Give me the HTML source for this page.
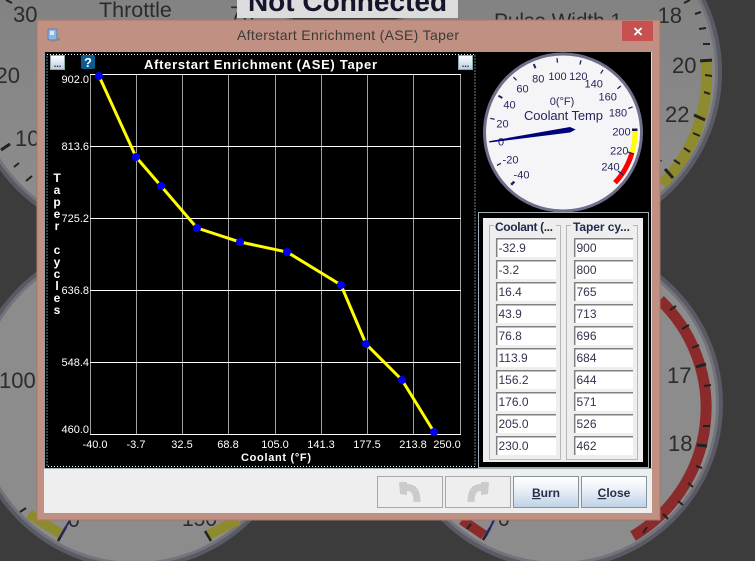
<!DOCTYPE html>
<html><head><meta charset="utf-8"><title>Afterstart Enrichment (ASE) Taper</title>
<style>
html,body{margin:0;padding:0;background:#3c3c3c;width:755px;height:561px;overflow:hidden}
svg{display:block;font-family:"Liberation Sans",sans-serif}
.g{fill:#2b2b2b}
.yl{fill:#fff;font-size:11px;text-anchor:end}
.xl{fill:#fff;font-size:11px;text-anchor:middle}
.ya{fill:#fff;font-size:12px;font-weight:bold;text-anchor:middle}
.gl{fill:#26265e;font-size:11px;text-anchor:middle}
.ft{fill:#33334f;font-size:12px}
.h{fill:#1e2a4a;font-size:12px;font-weight:bold}
.bt{fill:#26304a;font-size:12px;font-weight:bold;text-anchor:middle}
</style></head><body>
<svg width="755" height="561" viewBox="0 0 755 561" xmlns="http://www.w3.org/2000/svg">
<defs>
<linearGradient id="btn" x1="0" y1="0" x2="0" y2="1"><stop offset="0" stop-color="#fff"/><stop offset=".35" stop-color="#f0f4f9"/><stop offset="1" stop-color="#bdd1e6"/></linearGradient>
<linearGradient id="sm" x1="0" y1="0" x2="0" y2="1"><stop offset="0" stop-color="#fff"/><stop offset="1" stop-color="#b9cde0"/></linearGradient>
<linearGradient id="face" x1="0" y1="0" x2="0" y2="1"><stop offset="0" stop-color="#7e7e7e"/><stop offset="1" stop-color="#8e8e8e"/></linearGradient>
</defs>
<rect width="755" height="561" fill="#3c3c3c"/>

<!-- background gauges -->
<g>
<circle cx="135" cy="72" r="167" fill="#5a5a64"/><circle cx="135" cy="72" r="163" fill="#73737c"/><circle cx="135" cy="72" r="160" fill="url(#face)"/>
<circle cx="555" cy="72" r="167" fill="#5a5a64"/><circle cx="555" cy="72" r="163" fill="#73737c"/><circle cx="555" cy="72" r="160" fill="url(#face)"/>
<circle cx="135" cy="404" r="165" fill="#5a5a64"/><circle cx="135" cy="404" r="161" fill="#73737c"/><circle cx="135" cy="404" r="158" fill="#8c8c8c"/>
<circle cx="558" cy="404" r="165" fill="#5a5a64"/><circle cx="558" cy="404" r="161" fill="#73737c"/><circle cx="558" cy="404" r="158" fill="#8c8c8c"/>

<!-- top left ticks -->
<g stroke="#222" stroke-width="2">
<line x1="6" y1="0" x2="12" y2="3"/>
<line x1="1" y1="150" x2="10" y2="144" stroke-width="3"/>
<line x1="14" y1="167" x2="19" y2="163"/><line x1="26" y1="181" x2="32" y2="176"/>
</g>

<!-- top right band -->
<path d="M706 62 A152 152 0 0 1 662 184" fill="none" stroke="#8e8b2e" stroke-width="11"/>
<g stroke="#222" stroke-width="2">
<line x1="684" y1="3" x2="690" y2="0"/><line x1="695" y1="14" x2="701" y2="12"/><line x1="699" y1="29" x2="706" y2="28"/><line x1="703" y1="44" x2="710" y2="44"/>
<line x1="705" y1="75" x2="712" y2="76"/><line x1="704" y1="92" x2="710" y2="94"/>
<line x1="694" y1="115" x2="705" y2="120" stroke-width="3"/><line x1="693" y1="133" x2="700" y2="136"/><line x1="684" y1="148" x2="690" y2="152"/><line x1="674" y1="160" x2="680" y2="164"/>
<line x1="665" y1="169" x2="673" y2="178" stroke-width="3"/>
</g>
<rect x="700" y="59" width="12" height="3" fill="#222" transform="rotate(-4 706 60)"/>

<!-- bottom left band -->
<path d="M29 514 L61 534 M208 535 L238 520" fill="none" stroke="#8e8b2e" stroke-width="10"/>
<g stroke="#222" stroke-width="2"><line x1="20" y1="512" x2="26" y2="508"/><line x1="58" y1="541" x2="66" y2="527" stroke-width="2.5"/><line x1="205" y1="531" x2="211" y2="541" stroke-width="2.5"/></g>
<line x1="60" y1="537" x2="70" y2="520" stroke="#26266e" stroke-width="2"/>

<!-- bottom right band -->
<path d="M660 300 A149 149 0 0 1 633 536" fill="none" stroke="#8a2a2a" stroke-width="11"/>
<path d="M462 520 L484 535" fill="none" stroke="#8a2a2a" stroke-width="10"/>
<g stroke="#222" stroke-width="2">
<line x1="670" y1="310" x2="676" y2="306"/><line x1="682" y1="329" x2="689" y2="325"/><line x1="692" y1="348" x2="699" y2="345"/>
<line x1="696" y1="367" x2="706" y2="364" stroke-width="3"/><line x1="704" y1="386" x2="711" y2="385"/><line x1="703" y1="426" x2="710" y2="426"/>
<line x1="697" y1="445" x2="707" y2="446" stroke-width="3"/><line x1="696" y1="466" x2="702" y2="468"/><line x1="688" y1="483" x2="693" y2="487"/><line x1="678" y1="501" x2="683" y2="505"/><line x1="663" y1="514" x2="668" y2="519"/><line x1="643" y1="533" x2="647" y2="527"/>
<line x1="483" y1="540" x2="490" y2="528" stroke-width="2.5"/><line x1="467" y1="529" x2="471" y2="524"/>
</g>
<line x1="486" y1="536" x2="494" y2="520" stroke="#26266e" stroke-width="2"/>

<!-- gauge text -->
<g font-size="22">
<text class="g" x="99" y="17" font-size="21.5">Throttle</text>
<text class="g" x="13" y="22">30</text><text class="g" x="-4.5" y="83">20</text><text class="g" x="15" y="146">10</text>
<text class="g" x="230" y="22">70</text>
<text class="g" x="494" y="28" font-size="21" textLength="128">Pulse Width 1</text>
<text class="g" x="657.5" y="23">18</text><text class="g" x="672" y="73">20</text><text class="g" x="665" y="122">22</text><text class="g" x="638" y="165">24</text>
<text class="g" x="-1" y="388">100</text>
<text class="g" x="667" y="383">17</text><text class="g" x="668" y="451">18</text>
<text class="g" x="182" y="526" font-size="21">150</text>
<text class="g" x="68" y="527" font-size="21">0</text><text class="g" x="498" y="526" font-size="21">0</text>
</g>

<!-- Not Connected -->
<rect x="237" y="0" width="221" height="18" fill="#dcdcdc"/>
<text x="347.5" y="11" font-size="28" font-weight="bold" fill="#14142a" text-anchor="middle">Not Connected</text>
</g>

<!-- Dialog -->
<rect x="37" y="20" width="623" height="500" fill="#c09082" stroke="#a8796c" stroke-width="1"/>
<rect x="44" y="52" width="608" height="461" fill="#eeeeee"/>
<rect x="622" y="21" width="31" height="20" fill="#c75050"/>
<path d="M634.5 28 L641.5 35 M641.5 28 L634.5 35" stroke="#fff" stroke-width="1.8"/>
<text x="237" y="40" font-size="14" fill="#3a3a3a" textLength="222">Afterstart Enrichment (ASE) Taper</text>
<!-- window icon -->
<rect x="48" y="29" width="9" height="11" rx="1.5" fill="#8fb4e0" stroke="#5b7fb0" stroke-width="1"/>
<rect x="50" y="31" width="4" height="4" fill="#dce8f6"/>
<path d="M52 41 L60 39" stroke="#808890" stroke-width="2"/>

<!-- black content -->
<rect x="44" y="52" width="608" height="417" fill="#000"/>
<line x1="44.5" y1="52" x2="44.5" y2="469" stroke="#8fa0a8"/>
<line x1="651.5" y1="52" x2="651.5" y2="469" stroke="#cfdde4"/>
<line x1="44" y1="468.5" x2="652" y2="468.5" stroke="#9fb0b8"/>
<rect x="47" y="54.5" width="428" height="412" fill="none" stroke="#fff" stroke-dasharray="1 2"/>

<!-- chart -->
<g stroke="#a0a0a0" stroke-width="1">
<line x1="90.5" y1="74" x2="90.5" y2="434"/><line x1="136.5" y1="74" x2="136.5" y2="434"/><line x1="182.5" y1="74" x2="182.5" y2="434"/><line x1="228.5" y1="74" x2="228.5" y2="434"/><line x1="275.5" y1="74" x2="275.5" y2="434"/><line x1="321.5" y1="74" x2="321.5" y2="434"/><line x1="367.5" y1="74" x2="367.5" y2="434"/><line x1="413.5" y1="74" x2="413.5" y2="434"/><line x1="460.5" y1="74" x2="460.5" y2="434"/>
</g>
<g stroke="#fff" stroke-width="1">
<line x1="90" y1="74.5" x2="461" y2="74.5"/><line x1="90" y1="146.5" x2="461" y2="146.5"/><line x1="90" y1="218.5" x2="461" y2="218.5"/><line x1="90" y1="290.5" x2="461" y2="290.5"/><line x1="90" y1="362.5" x2="461" y2="362.5"/><line x1="90" y1="434.5" x2="461" y2="434.5"/>
</g>
<polyline points="99,76 136,157 161,186 197,228 240,242 287,252 341,285 366,344 402,380 434,432" fill="none" stroke="#ffff00" stroke-width="3"/>
<g fill="#0000f0">
<circle cx="99" cy="76" r="4"/><circle cx="136" cy="157" r="4"/><circle cx="161" cy="186" r="4"/><circle cx="197" cy="228" r="4"/><circle cx="240" cy="242" r="4"/><circle cx="287" cy="252" r="4"/><circle cx="341" cy="285" r="4"/><circle cx="366" cy="344" r="4"/><circle cx="402" cy="380" r="4"/><circle cx="434" cy="432" r="4"/>
</g>
<text x="144" y="69" font-size="13" font-weight="bold" fill="#fff" textLength="233">Afterstart Enrichment (ASE) Taper</text>
<text class="yl" x="89" y="83">902.0</text><text class="yl" x="89" y="150">813.6</text><text class="yl" x="89" y="222">725.2</text><text class="yl" x="89" y="294">636.8</text><text class="yl" x="89" y="366">548.4</text><text class="yl" x="89" y="433">460.0</text>
<text class="xl" x="95" y="448">-40.0</text><text class="xl" x="136" y="448">-3.7</text><text class="xl" x="182" y="448">32.5</text><text class="xl" x="228" y="448">68.8</text><text class="xl" x="275" y="448">105.0</text><text class="xl" x="321" y="448">141.3</text><text class="xl" x="367" y="448">177.5</text><text class="xl" x="413" y="448">213.8</text><text class="xl" x="447" y="448">250.0</text>
<text x="241" y="461" font-size="11" font-weight="bold" fill="#fff" textLength="70">Coolant (°F)</text>
<text class="ya" x="57" y="182">T</text><text class="ya" x="57" y="194">a</text><text class="ya" x="57" y="206">p</text><text class="ya" x="57" y="218">e</text><text class="ya" x="57" y="230">r</text>
<text class="ya" x="57" y="254">c</text><text class="ya" x="57" y="266">y</text><text class="ya" x="57" y="278">c</text><text class="ya" x="57" y="290">l</text><text class="ya" x="57" y="302">e</text><text class="ya" x="57" y="314">s</text>

<!-- small buttons -->
<rect x="50.5" y="55.5" width="14" height="14" fill="url(#sm)" stroke="#8aa"/>
<text x="57.5" y="67" font-size="9" font-weight="bold" fill="#223" text-anchor="middle">...</text>
<rect x="81" y="55" width="14" height="14" rx="2" fill="#0b5c8e"/>
<text x="88" y="67" font-size="13" font-weight="bold" fill="#fff" text-anchor="middle">?</text>
<rect x="458.5" y="55.5" width="14" height="14" fill="url(#sm)" stroke="#8aa"/>
<text x="465.5" y="67" font-size="9" font-weight="bold" fill="#223" text-anchor="middle">...</text>

<!-- coolant gauge -->
<circle cx="563" cy="132.5" r="78.5" fill="#f5f5f7" stroke="#6e6e8a" stroke-width="3"/>
<g stroke="#26265e" stroke-width="1.3">
<line x1="563" y1="58" x2="563" y2="62.5" transform="rotate(-135.5 563 132)" stroke-width="2.5"/>
<line x1="563" y1="58" x2="563" y2="62.5" transform="rotate(-116.8 563 132)"/>
<line x1="563" y1="58" x2="563" y2="62.5" transform="rotate(-79.4 563 132)"/>
<line x1="563" y1="58" x2="563" y2="62.5" transform="rotate(-60.7 563 132)" stroke-width="2"/>
<line x1="563" y1="58" x2="563" y2="62.5" transform="rotate(-42 563 132)"/>
<line x1="563" y1="58" x2="563" y2="62.5" transform="rotate(-23.3 563 132)" stroke-width="2"/>
<line x1="563" y1="58" x2="563" y2="62.5" transform="rotate(-4.6 563 132)"/>
<line x1="563" y1="58" x2="563" y2="62.5" transform="rotate(14.1 563 132)"/>
<line x1="563" y1="58" x2="563" y2="62.5" transform="rotate(32.8 563 132)"/>
<line x1="563" y1="58" x2="563" y2="62.5" transform="rotate(51.5 563 132)"/>
<line x1="563" y1="58" x2="563" y2="62.5" transform="rotate(70.2 563 132)"/>
</g>
<path d="M635 130 A72 72 0 0 1 631.7 153.5" fill="none" stroke="#ffff00" stroke-width="5"/>
<path d="M631.7 153.5 A72 72 0 0 1 615 182.7" fill="none" stroke="#ff0000" stroke-width="5"/>
<rect x="632" y="128.5" width="5.5" height="2.5" fill="#1a1a4a"/>
<g stroke="#26265e" stroke-width="1.3"><line x1="628" y1="152" x2="634" y2="154"/><line x1="618" y1="171" x2="623" y2="175"/></g>
<text class="gl" x="557.5" y="80">100</text><text class="gl" x="578.3" y="80">120</text><text class="gl" x="593.7" y="87.5">140</text><text class="gl" x="607.7" y="100.5">160</text><text class="gl" x="618" y="116.5">180</text><text class="gl" x="621.5" y="135.5">200</text><text class="gl" x="619.3" y="154.5">220</text><text class="gl" x="610.5" y="170.5">240</text>
<text class="gl" x="538.3" y="82.3">80</text><text class="gl" x="522.5" y="92.3">60</text><text class="gl" x="509.5" y="108.7">40</text><text class="gl" x="502.5" y="127.3">20</text><text class="gl" x="501" y="145.7">0</text><text class="gl" x="510.5" y="163.3">-20</text><text class="gl" x="521.5" y="178.3">-40</text>
<text class="gl" x="562" y="105">0(°F)</text>
<text x="524" y="120" font-size="13" fill="#26265e" textLength="79">Coolant Temp</text>
<polygon points="489,141.2 570,127 575.7,129.5 570,132.5 489.5,142.5" fill="#00007a"/>

<!-- table panel -->
<rect x="478.5" y="212.5" width="170" height="255" fill="#000" stroke="#9fb0b8"/>
<rect x="483" y="218" width="160" height="244" fill="#eeeeee"/>
<path d="M494 225.5 H489.5 V459.5 H560.5 V225.5 H556" fill="none" stroke="#b8b8b8"/>
<path d="M571 225.5 H566.5 V459.5 H637.5 V225.5 H633" fill="none" stroke="#b8b8b8"/>
<text class="h" x="495" y="231" textLength="58">Coolant (...</text>
<text class="h" x="573" y="231" textLength="57">Taper cy...</text>

<g fill="#fff"><rect x="496" y="238" width="60" height="19"/><rect x="496" y="260" width="60" height="19"/><rect x="496" y="282" width="60" height="19"/><rect x="496" y="304" width="60" height="19"/><rect x="496" y="326" width="60" height="19"/><rect x="496" y="348" width="60" height="19"/><rect x="496" y="370" width="60" height="19"/><rect x="496" y="392" width="60" height="19"/><rect x="496" y="414" width="60" height="19"/><rect x="496" y="436" width="60" height="19"/>
<rect x="574" y="238" width="59" height="19"/><rect x="574" y="260" width="59" height="19"/><rect x="574" y="282" width="59" height="19"/><rect x="574" y="304" width="59" height="19"/><rect x="574" y="326" width="59" height="19"/><rect x="574" y="348" width="59" height="19"/><rect x="574" y="370" width="59" height="19"/><rect x="574" y="392" width="59" height="19"/><rect x="574" y="414" width="59" height="19"/><rect x="574" y="436" width="59" height="19"/></g>
<g fill="none" stroke="#808080" stroke-width="1.5">
<path d="M496.7 257 V238.7 H556"/><path d="M496.7 279 V260.7 H556"/><path d="M496.7 301 V282.7 H556"/><path d="M496.7 323 V304.7 H556"/><path d="M496.7 345 V326.7 H556"/><path d="M496.7 367 V348.7 H556"/><path d="M496.7 389 V370.7 H556"/><path d="M496.7 411 V392.7 H556"/><path d="M496.7 433 V414.7 H556"/><path d="M496.7 455 V436.7 H556"/>
<path d="M574.7 257 V238.7 H633"/><path d="M574.7 279 V260.7 H633"/><path d="M574.7 301 V282.7 H633"/><path d="M574.7 323 V304.7 H633"/><path d="M574.7 345 V326.7 H633"/><path d="M574.7 367 V348.7 H633"/><path d="M574.7 389 V370.7 H633"/><path d="M574.7 411 V392.7 H633"/><path d="M574.7 433 V414.7 H633"/><path d="M574.7 455 V436.7 H633"/>
</g>
<text class="ft" x="498.5" y="252">-32.9</text><text class="ft" x="498.5" y="274">-3.2</text><text class="ft" x="498.5" y="296">16.4</text><text class="ft" x="498.5" y="318">43.9</text><text class="ft" x="498.5" y="340">76.8</text><text class="ft" x="498.5" y="362">113.9</text><text class="ft" x="498.5" y="384">156.2</text><text class="ft" x="498.5" y="406">176.0</text><text class="ft" x="498.5" y="428">205.0</text><text class="ft" x="498.5" y="450">230.0</text>
<text class="ft" x="576.5" y="252">900</text><text class="ft" x="576.5" y="274">800</text><text class="ft" x="576.5" y="296">765</text><text class="ft" x="576.5" y="318">713</text><text class="ft" x="576.5" y="340">696</text><text class="ft" x="576.5" y="362">684</text><text class="ft" x="576.5" y="384">644</text><text class="ft" x="576.5" y="406">571</text><text class="ft" x="576.5" y="428">526</text><text class="ft" x="576.5" y="450">462</text>

<!-- bottom buttons -->
<rect x="377.5" y="476.5" width="65" height="31" fill="#eeeeee" stroke="#a8a8a8"/>
<rect x="445.5" y="476.5" width="65" height="31" fill="#eeeeee" stroke="#a8a8a8"/>
<path d="M402 487.5 H408 Q417 488 417 502" fill="none" stroke="#cbcbcb" stroke-width="7"/>
<path d="M399 482 L407 482 L407 495 L400 494 Z" fill="#cbcbcb"/>
<path d="M486 487.5 H480 Q471 488 471 502" fill="none" stroke="#cbcbcb" stroke-width="7"/>
<path d="M489 482 L481 482 L481 495 L488 494 Z" fill="#cbcbcb"/>
<rect x="513.5" y="476.5" width="65" height="31" fill="url(#btn)" stroke="#84949f"/>
<rect x="581.5" y="476.5" width="65" height="31" fill="url(#btn)" stroke="#84949f"/>
<text class="bt" x="546" y="497"><tspan text-decoration="underline">B</tspan>urn</text>
<text class="bt" x="614" y="497"><tspan text-decoration="underline">C</tspan>lose</text>
</svg>
</body></html>
